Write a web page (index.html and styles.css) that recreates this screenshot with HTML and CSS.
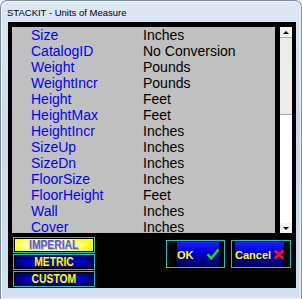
FILE: index.html
```html
<!DOCTYPE html>
<html lang="en">
<head>
    <meta charset="UTF-8">
    <title>STACKIT - Units of Measure</title>
    <link rel="stylesheet" href="styles.css">
</head>
<body>

    <div class="window">
        <div class="titlebar">STACKIT - Units of Measure</div>

        <div class="client">
            <!-- Units list -->
            <div class="top">
                <div class="listbox">
                    <div class="row"><span class="key">Size</span><span class="val">Inches</span></div>
                    <div class="row"><span class="key">CatalogID</span><span class="val">No Conversion</span></div>
                    <div class="row"><span class="key">Weight</span><span class="val">Pounds</span></div>
                    <div class="row"><span class="key">WeightIncr</span><span class="val">Pounds</span></div>
                    <div class="row"><span class="key">Height</span><span class="val">Feet</span></div>
                    <div class="row"><span class="key">HeightMax</span><span class="val">Feet</span></div>
                    <div class="row"><span class="key">HeightIncr</span><span class="val">Inches</span></div>
                    <div class="row"><span class="key">SizeUp</span><span class="val">Inches</span></div>
                    <div class="row"><span class="key">SizeDn</span><span class="val">Inches</span></div>
                    <div class="row"><span class="key">FloorSize</span><span class="val">Inches</span></div>
                    <div class="row"><span class="key">FloorHeight</span><span class="val">Feet</span></div>
                    <div class="row"><span class="key">Wall</span><span class="val">Inches</span></div>
                    <div class="row last"><span class="key">Cover</span><span class="val">Inches</span></div>
                </div>
                <div class="scrollbar">
                    <div class="sb-btn"><span class="arrow-up"></span></div>
                    <div class="sb-thumb"></div>
                    <div class="sb-track"></div>
                    <div class="sb-btn"><span class="arrow-down"></span></div>
                </div>
            </div>

            <!-- Unit systems and dialog buttons -->
            <div class="bottom">
                <div class="units">
                    <div class="unit active"><span>IMPERIAL</span></div>
                    <div class="unit"><span>METRIC</span></div>
                    <div class="unit"><span>CUSTOM</span></div>
                </div>
                <div class="actions">
                    <div class="act ok">
                        <span>OK</span>
                        <svg width="12" height="11" viewBox="0 0 12 11"><path d="M1.3 6 L4.3 9.5 L10.8 1.3" fill="none" stroke="#10e010" stroke-width="2.6" stroke-linecap="round" stroke-linejoin="round"/></svg>
                    </div>
                    <div class="act cancel">
                        <span>Cancel</span>
                        <svg width="10" height="9" viewBox="0 0 10 9"><path d="M1.5 1.2 L8.5 7.8 M8.5 1.2 L1.5 7.8" fill="none" stroke="#ff1010" stroke-width="2.6" stroke-linecap="round"/></svg>
                    </div>
                </div>
            </div>
        </div>
    </div>

</body>
</html>
```

FILE: styles.css
```css
/* Dialog window */
body {
    margin: 0;
    background: #fff;
    font-family: 'Liberation Sans', Arial, sans-serif;
}

.window {
    width: 302px;
    height: 299px;
    box-sizing: border-box;
    border: 1px solid #7d8d9f;
    border-bottom: none;
    border-radius: 7px 7px 0 0;
    background: linear-gradient(to bottom, #dde8f4, #c9daed 45%, #d3e1f0);
    box-shadow: inset 0 0 0 1px rgba(255, 255, 255, 0.6);
    overflow: hidden;
}

.titlebar {
    height: 21px;
    box-sizing: border-box;
    padding: 6px 0 0 6px;
    font-size: 9.5px;
    line-height: 11px;
    color: #000;
}

.client {
    margin-left: 7px;
    width: 288px;
    height: 266px;
    background: #000;
    display: flex;
    flex-direction: column;
}

/* Units list */
.top {
    display: flex;
    gap: 5px;
    padding: 5px 4px 0 4px;
    height: 206px;
}

.listbox {
    flex: 1;
    background: #c0c0c0;
    padding-left: 19px;
}

.row {
    display: flex;
    font-size: 14px;
    line-height: 16px;
    height: 16px;
    white-space: nowrap;
}

.row.last {
    height: 14px;
}

.key {
    width: 112px;
    color: #0000ff;
}

.val {
    color: #000;
}

.scrollbar {
    width: 12px;
    display: flex;
    flex-direction: column;
    background: #fff;
}

.sb-btn {
    height: 10px;
    background: #f4f4f4;
    display: flex;
    align-items: center;
    justify-content: center;
}

.arrow-up {
    border-left: 3px solid transparent;
    border-right: 3px solid transparent;
    border-bottom: 3px solid #000;
}

.arrow-down {
    border-left: 3px solid transparent;
    border-right: 3px solid transparent;
    border-top: 3px solid #000;
}

.sb-thumb {
    height: 78px;
    background: #ececec;
    border-top: 1px solid #a8a8a8;
    border-bottom: 1px solid #a8a8a8;
    box-sizing: border-box;
}

.sb-track {
    flex: 1;
    background: #fff;
}

/* Bottom buttons */
.bottom {
    display: flex;
    padding: 4px 5px 0 5px;
}

.units {
    width: 82px;
    display: flex;
    flex-direction: column;
    gap: 1px;
}

.unit {
    height: 16px;
    box-sizing: border-box;
    border: 1px solid #14c8c8;
    padding: 1px;
    background:
        linear-gradient(to right, rgba(0, 0, 50, 0.6), transparent 18%, transparent 82%, rgba(0, 0, 50, 0.6)) content-box,
        linear-gradient(#00006a, #0000f0 50%, #00006a) content-box,
        #000;
    display: flex;
    align-items: center;
    justify-content: center;
}

.unit span {
    display: inline-block;
    font-size: 12px;
    font-weight: bold;
    line-height: 12px;
    color: #ffff00;
    text-shadow: 1px 1px 0 #202000;
    transform: scaleX(0.86);
}

.unit.active {
    background:
        radial-gradient(ellipse 55% 70% at 45% 50%, #fffff4, #ffffa0 60%, #ffff00) content-box,
        #000;
}

.unit.active span {
    color: #5a5ad0;
    text-shadow: 1px 1px 0 #c0c0d8;
}

.actions {
    margin-left: auto;
    margin-top: 3px;
    display: flex;
    gap: 6px;
}

.act {
    height: 28px;
    box-sizing: border-box;
    border: 1px solid #14c8c8;
    padding: 1px;
    background:
        linear-gradient(#2020ff, #0000e0 35%, #000098 70%, #000058) content-box,
        #000;
    display: flex;
    align-items: center;
    justify-content: space-between;
    font-size: 11px;
    font-weight: bold;
    color: #ffff00;
}

.ok {
    width: 59px;
    padding: 1px 5px 0 10px;
}

.cancel {
    width: 60px;
    padding: 1px 6px 0 3px;
}
```
